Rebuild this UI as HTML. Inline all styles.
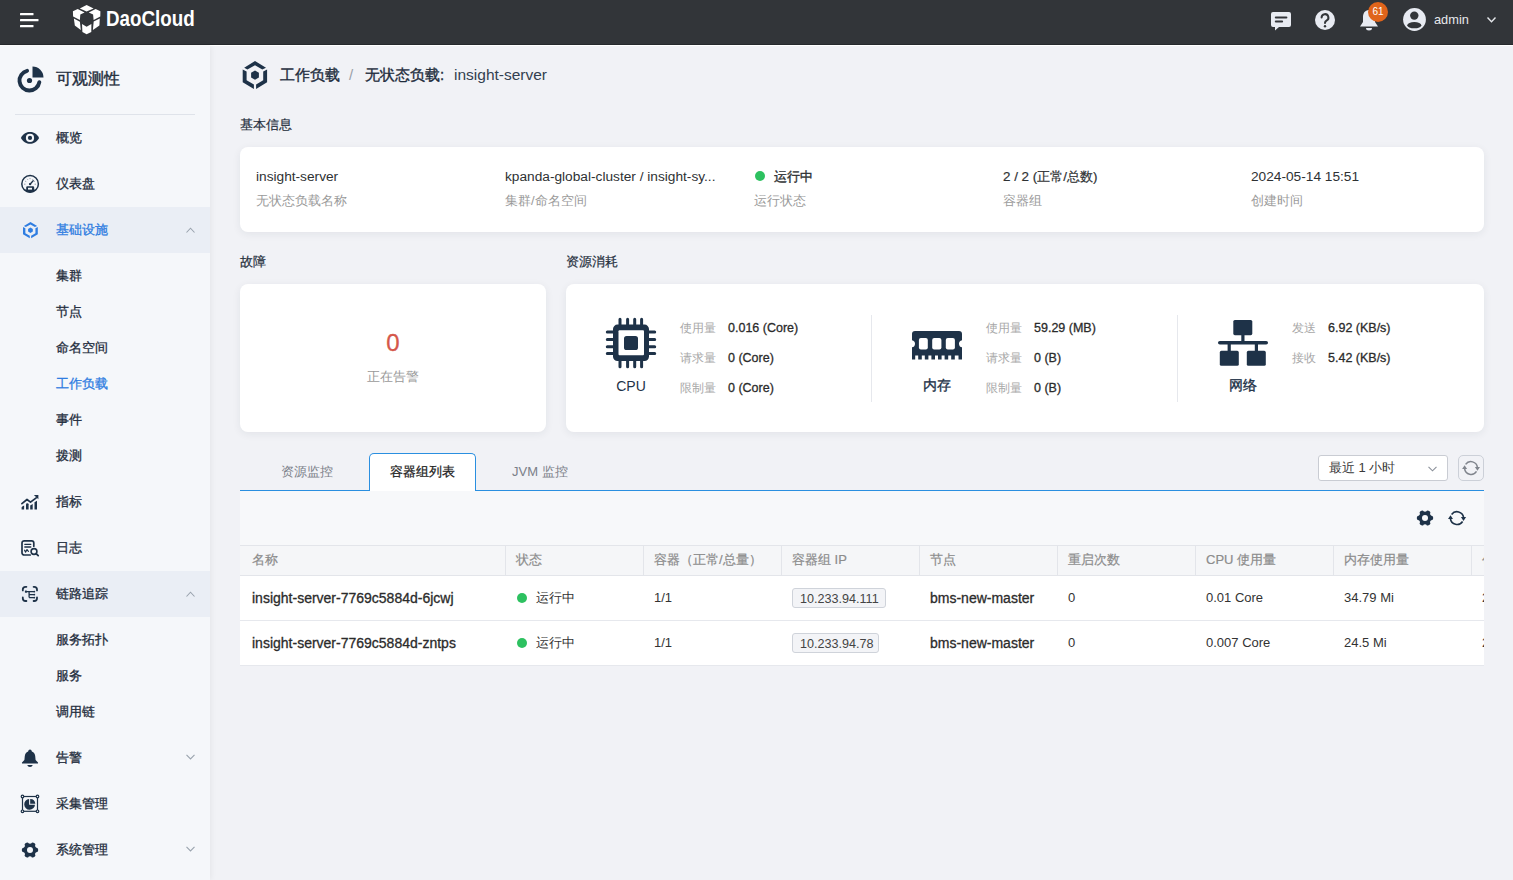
<!DOCTYPE html>
<html><head><meta charset="utf-8">
<style>
*{box-sizing:border-box;margin:0;padding:0}
html,body{width:1513px;height:880px;overflow:hidden}
body{font-family:"Liberation Sans",sans-serif;background:#f1f2f6;position:relative;color:#252f3d}
.a{position:absolute;white-space:nowrap}
svg.a{overflow:visible}
#top{position:absolute;left:0;top:0;width:1513px;height:44px;background:#323539}
#side{position:absolute;left:0;top:46px;width:210px;height:834px;background:#f5f7fa;box-shadow:1px 0 6px rgba(0,0,0,0.06)}
.band{position:absolute;left:0;width:210px;height:46px;background:#eaeef5}
.nt{position:absolute;left:56px;font-size:13px;line-height:16px;color:#1f2d3d;white-space:nowrap;-webkit-text-stroke:0.3px currentColor}
.md{-webkit-text-stroke:0.3px currentColor}
.card{position:absolute;background:#fff;border-radius:8px;box-shadow:0 2px 8px rgba(30,40,60,0.07)}
.t14{font-size:13.7px;line-height:16px;color:#2e3133}
.g13{font-size:13px;line-height:16px;color:#9a9a9a}
.k12{font-size:12px;line-height:16px;color:#a8a8a8}
.v12{font-size:12.5px;line-height:16px;color:#2b2b2b;-webkit-text-stroke:0.3px currentColor}
.th{font-size:13px;line-height:16px;color:#8c8c8c;-webkit-text-stroke:0.2px currentColor}
.td{font-size:13px;line-height:16px;color:#333}
.tb{font-size:14px;line-height:16px;color:#2b2b2b;-webkit-text-stroke:0.3px currentColor}
.dot{position:absolute;width:10px;height:10px;border-radius:50%;background:#2dc160}
.vd{position:absolute;top:546px;width:1px;height:29px;background:#e3e5ea}
</style></head><body>

<!-- TOP BAR -->
<div id="top">
  <svg class="a" style="left:20px;top:13px" width="20" height="16" viewBox="0 0 20 16">
    <rect x="0" y="0" width="13.5" height="2.2" rx="0.5" fill="#fff"/>
    <rect x="0" y="6" width="18.5" height="2.2" rx="0.5" fill="#fff"/>
    <rect x="0" y="12" width="13.5" height="2.2" rx="0.5" fill="#fff"/>
  </svg>
  <!-- logo cube -->
  <svg class="a" style="left:70px;top:2px" width="34" height="34" viewBox="0 0 34 34">
    <g fill="#fff">
    <polygon points="16.6,2.9 23.6,6.4 16.6,9.6 9.8,6.4"/>
    <polygon points="2.9,9.2 7.7,7 14.6,10.4 10.3,12.6 9.9,18.1 3.1,14.4"/>
    <polygon points="30.4,9.2 25.6,7 18.8,10.4 23.1,12.6 23.6,18.1 30.3,14.4"/>
    <polygon points="3.9,16.6 9.9,19.8 10.8,27.9 4.8,23.6"/>
    <polygon points="29.8,16.4 23.7,19.6 22.9,27.9 29.4,23.6"/>
    <polygon points="12,22 16.6,24.8 21.4,22 21.3,30.1 16.6,32.2 12.4,30"/>
    </g>
  </svg>
  <div class="a" style="left:106.3px;top:6.3px;font-size:22.5px;font-weight:bold;color:#fff;line-height:26px;transform:scaleX(0.835);transform-origin:0 0">DaoCloud</div>

  <!-- message -->
  <svg class="a" style="left:1271px;top:12px" width="20" height="19" viewBox="0 0 20 19">
    <path d="M2,0 H18 A2,2 0 0 1 20,2 V13 A2,2 0 0 1 18,15 H8 L4,18.6 L4,15 H2 A2,2 0 0 1 0,13 V2 A2,2 0 0 1 2,0 Z" fill="#e8ebf2"/>
    <rect x="3.8" y="4.4" width="12.6" height="2" rx="1" fill="#323539"/>
    <rect x="3.8" y="8.6" width="8.3" height="2" rx="1" fill="#323539"/>
  </svg>
  <!-- help -->
  <svg class="a" style="left:1315px;top:9.6px" width="20" height="20" viewBox="0 0 20 20">
    <circle cx="10" cy="10" r="10" fill="#e8ebf2"/>
    <path d="M6.6,7.6 A3.4,3.4 0 1 1 11.5,10.6 C10.4,11.2 10,11.8 10,13" stroke="#323539" stroke-width="2" fill="none" stroke-linecap="round"/>
    <circle cx="10" cy="16.2" r="1.2" fill="#323539"/>
  </svg>
  <!-- bell -->
  <svg class="a" style="left:1359px;top:8px" width="20" height="23" viewBox="0 0 20 23">
    <path d="M10,2 C5.5,2 4,5.8 4,9.5 V14 L1,18.4 H19 L16,14 V9.5 C16,5.8 14.5,2 10,2 Z" fill="#e8ebf2"/>
    <path d="M7,20 A3,2.5 0 0 0 13,20 Z" fill="#e8ebf2"/>
  </svg>
  <div class="a" style="left:1368px;top:2px;width:20px;height:20px;border-radius:50%;background:#e0641b;color:#fff;font-size:10px;line-height:20px;text-align:center">61</div>
  <!-- avatar -->
  <svg class="a" style="left:1402.8px;top:8px" width="23" height="23" viewBox="0 0 23 23">
    <circle cx="11.5" cy="11.5" r="11.4" fill="#e8ebf2"/>
    <circle cx="11.3" cy="7.6" r="4.2" fill="#323539"/>
    <ellipse cx="11.3" cy="17.2" rx="7" ry="3.1" fill="#323539"/>
  </svg>
  <div class="a" style="left:1434px;top:11px;font-size:12.8px;color:#e6e8ec;line-height:18px">admin</div>
  <svg class="a" style="left:1487px;top:17px" width="9" height="6" viewBox="0 0 9 6">
    <path d="M0.5,0.6 L4.5,4.8 L8.5,0.6" stroke="#e6e8ec" stroke-width="1.4" fill="none"/>
  </svg>
</div>

<div class="a" style="left:0;top:44px;width:1513px;height:1px;background:#26292d"></div>
<div class="a" style="left:0;top:45px;width:1513px;height:1px;background:#fff"></div>
<!-- SIDEBAR -->
<div id="side"></div>
<div class="band" style="top:207px"></div>
<div class="band" style="top:571px"></div>

<!-- observability icon -->
<svg class="a" style="left:10px;top:60px" width="40" height="40" viewBox="0 0 40 40">
  <path d="M17.1,10.8 A10,10 0 1 0 29.35,22.2" stroke="#1e3248" stroke-width="3.9" fill="none" stroke-linecap="round"/>
  <path d="M22.5,17.5 V6.6 A10.9,10.9 0 0 1 33.5,17.5 Z" fill="#1e3248"/>
  <circle cx="19.5" cy="20.5" r="2.6" fill="#1e3248"/>
</svg>
<div class="a" style="left:56px;top:71px;font-size:16px;line-height:16px;-webkit-text-stroke:0.4px #1f2d3d;color:#1f2d3d">可观测性</div>
<div class="a" style="left:15px;top:114px;width:180px;height:1px;background:#dfe3ea"></div>

<!-- nav items -->
<svg class="a" style="left:16px;top:124px" width="28" height="28" viewBox="0 0 28 28">
  <path d="M4.9,13.9 C7.5,9.6 10.5,8.1 14,8.1 C17.5,8.1 20.5,9.6 23.1,13.9 C20.5,18.2 17.5,19.7 14,19.7 C10.5,19.7 7.5,18.2 4.9,13.9 Z" fill="#1e3248"/>
  <circle cx="14" cy="13.9" r="4.1" fill="#f5f7fa"/>
  <circle cx="14" cy="13.9" r="2.1" fill="#1e3248"/>
</svg>
<div class="nt" style="top:130px">概览</div>

<svg class="a" style="left:16px;top:170px" width="28" height="28" viewBox="0 0 28 28">
  <circle cx="14.1" cy="13.9" r="8.3" stroke="#1e3248" stroke-width="1.5" fill="none"/>
  <path d="M7.6,19.6 H20.6 A8.6,8.6 0 0 1 7.6,19.6 Z" fill="#1e3248"/>
  <rect x="10.2" y="16.2" width="8" height="4" rx="1.3" fill="#1e3248"/>
  <rect x="12" y="17.8" width="4" height="1.8" fill="#f5f7fa"/>
  <path d="M14,14.2 L17.2,10.8" stroke="#1e3248" stroke-width="1.3" stroke-linecap="round"/>
  <circle cx="14.1" cy="14.1" r="1.2" fill="#1e3248"/>
  <g stroke="#7d8794" stroke-width="0.9"><path d="M8.2,14.2 H9.4 M9.2,11.2 L10.2,11.6 M11.2,8.9 L11.8,9.7 M14,8.1 V9.1 M17.1,9 L16.6,9.7 M18.8,11.2 L18,11.6 M19.9,14.2 H18.7"/></g>
</svg>
<div class="nt" style="top:176px">仪表盘</div>


<svg class="a" style="left:22.5px;top:221.9px" width="14.8" height="16.2" viewBox="6.7 4.9 24.4 28" preserveAspectRatio="none">
  <polygon points="8.2,11.7 19,4.9 30,11.7 26.3,13.4 19,9.3 11.4,13.4" fill="#2f7de1"/>
  <polygon points="6.7,13.6 10.6,15.5 10.6,24.2 17.9,28.5 17.9,32.9 6.7,26.3" fill="#2f7de1"/>
  <polygon points="31.1,13.6 27.2,15.5 27.2,24.2 20.1,28.5 20.1,32.9 31.1,26.3" fill="#2f7de1"/>
  <polygon points="19,14.5 22.9,16.8 22.9,21.4 19,23.75 15.1,21.4 15.1,16.8" fill="#2f7de1"/>
</svg>
<div class="nt" style="top:222px;color:#2f7de1">基础设施</div>
<svg class="a" style="left:185.5px;top:227px" width="9" height="6" viewBox="0 0 9 6"><path d="M0.5,5.5 L4.5,1.2 L8.5,5.5" stroke="#9aa3ae" stroke-width="1.1" fill="none"/></svg>

<div class="nt" style="top:268px">集群</div>
<div class="nt" style="top:304px">节点</div>
<div class="nt" style="top:340px">命名空间</div>
<div class="nt" style="top:376px;color:#2f7de1">工作负载</div>
<div class="nt" style="top:412px">事件</div>
<div class="nt" style="top:448px">拨测</div>

<svg class="a" style="left:16px;top:488px" width="28" height="28" viewBox="0 0 28 28">
  <path d="M5.9,15.7 L11,11.5 L14.5,14.2 L20.2,9.8" stroke="#1e3248" stroke-width="1.7" fill="none" stroke-linecap="round" stroke-linejoin="round"/>
  <path d="M17.9,6.9 H22.4 V11.2 Z" fill="#1e3248"/>
  <path d="M5.6,21.6 V19.6 Q5.6,18.4 8.1,17.6 V21.6 Z" fill="#1e3248"/>
  <path d="M10,21.6 V16.3 Q10,15.2 11.3,15.2 Q12.6,15.2 12.6,16.3 V21.6 Z" fill="#1e3248"/>
  <path d="M14.2,21.6 V17.6 L16.7,16 V21.6 Z" fill="#1e3248"/>
  <path d="M18.5,21.6 V14.3 L21,12.7 V21.6 Z" fill="#1e3248"/>
</svg>
<div class="nt" style="top:494px">指标</div>

<svg class="a" style="left:16px;top:534px" width="28" height="28" viewBox="0 0 28 28">
  <path d="M17.8,12.2 V9 A2.2,2.2 0 0 0 15.6,6.8 H8.2 A2.2,2.2 0 0 0 6,9 V18.8 A2.2,2.2 0 0 0 8.2,21 H14.2" stroke="#1e3248" stroke-width="1.7" fill="none" stroke-linecap="round"/>
  <path d="M8.8,10.3 H14.8 M8.8,13 H14.8" stroke="#1e3248" stroke-width="1.3" stroke-linecap="round"/>
  <path d="M8.6,16.2 L9.5,18.1 L11,15.6 L12.4,17.3" stroke="#1e3248" stroke-width="1.2" fill="none" stroke-linecap="round" stroke-linejoin="round"/>
  <circle cx="18" cy="17.5" r="2.9" stroke="#1e3248" stroke-width="1.6" fill="none"/>
  <path d="M20.1,19.6 L22.2,21.6" stroke="#1e3248" stroke-width="1.8" stroke-linecap="round"/>
</svg>
<div class="nt" style="top:540px">日志</div>

<svg class="a" style="left:16px;top:580px" width="28" height="28" viewBox="0 0 28 28">
  <path d="M6.8,10.4 V9.6 A2.8,2.8 0 0 1 9.6,6.8 H10.4 M17.6,6.8 H18.2 A2.8,2.8 0 0 1 21,9.6 V10.4 M21,17.4 V18.2 A2.8,2.8 0 0 1 18.2,21 H17.6 M10.4,21 H9.6 A2.8,2.8 0 0 1 6.8,18.2 V17.4" stroke="#1e3248" stroke-width="1.8" fill="none" stroke-linecap="round"/>
  <rect x="8.9" y="10.5" width="2" height="2.2" rx="0.4" fill="#1e3248"/>
  <path d="M10,11.6 H18.4 M13.1,11.6 V17.6 M13.1,14.6 H18.4 M13.1,17.6 H18.4" stroke="#1e3248" stroke-width="1.3" fill="none"/>
  <g fill="#1e3248"><circle cx="18.3" cy="11.6" r="0.9"/><circle cx="18.3" cy="14.6" r="0.9"/><circle cx="18.3" cy="17.6" r="0.9"/></g>
</svg>
<div class="nt" style="top:586px">链路追踪</div>
<svg class="a" style="left:185.5px;top:591px" width="9" height="6" viewBox="0 0 9 6"><path d="M0.5,5.5 L4.5,1.2 L8.5,5.5" stroke="#9aa3ae" stroke-width="1.1" fill="none"/></svg>

<div class="nt" style="top:632px">服务拓扑</div>
<div class="nt" style="top:668px">服务</div>
<div class="nt" style="top:704px">调用链</div>

<svg class="a" style="left:16px;top:744px" width="28" height="28" viewBox="0 0 28 28">
  <path d="M14,5.5 C15,5.5 15.6,6.4 15.9,7.4 C18,8.1 18.9,9.8 19.2,12 L19.6,16 L22,18.6 C22.2,19.1 22,19.5 21.4,19.5 H6.6 C6,19.5 5.8,19.1 6,18.6 L8.4,16 L8.8,12 C9.1,9.8 10,8.1 12.1,7.4 C12.4,6.4 13,5.5 14,5.5 Z" fill="#1e3248"/>
  <path d="M11.3,21 H16.7 C16.4,22.3 15.4,23 14,23 C12.6,23 11.6,22.3 11.3,21 Z" fill="#1e3248"/>
</svg>
<div class="nt" style="top:750px">告警</div>
<svg class="a" style="left:185.5px;top:754px" width="9" height="6" viewBox="0 0 9 6"><path d="M0.5,0.8 L4.5,5 L8.5,0.8" stroke="#9aa3ae" stroke-width="1.1" fill="none"/></svg>

<svg class="a" style="left:16px;top:790px" width="28" height="28" viewBox="0 0 28 28">
  <rect x="6.5" y="6.5" width="15" height="14.8" stroke="#1e3248" stroke-width="1.2" fill="none"/>
  <g fill="#f5f7fa" stroke="#1e3248" stroke-width="1.2"><circle cx="6.5" cy="6.5" r="1.3"/><circle cx="21.5" cy="6.5" r="1.3"/><circle cx="6.5" cy="21.3" r="1.3"/><circle cx="21.5" cy="21.3" r="1.3"/></g>
  <path d="M13.1,8.9 V14.7 H19 A5.4,5.4 0 1 1 13.1,8.9 Z" fill="#1e3248"/>
  <path d="M14.2,8.9 A5.2,5.2 0 0 1 19.3,13.7 H14.2 Z" fill="#1e3248"/>
</svg>
<div class="nt" style="top:796px">采集管理</div>

<svg class="a" style="left:18px;top:838.2px" width="24" height="24" viewBox="0 0 24 24">
  <g transform="translate(12,12)" fill="#1e3248"><circle r="6.5"/><rect x="4.1" y="-2.2" width="4" height="4.4" rx="1.6" transform="rotate(0)"/><rect x="4.1" y="-2.2" width="4" height="4.4" rx="1.6" transform="rotate(60)"/><rect x="4.1" y="-2.2" width="4" height="4.4" rx="1.6" transform="rotate(120)"/><rect x="4.1" y="-2.2" width="4" height="4.4" rx="1.6" transform="rotate(180)"/><rect x="4.1" y="-2.2" width="4" height="4.4" rx="1.6" transform="rotate(240)"/><rect x="4.1" y="-2.2" width="4" height="4.4" rx="1.6" transform="rotate(300)"/></g>
  <circle cx="12" cy="12" r="3" fill="#f5f7fa"/>
</svg>
<div class="nt" style="top:842px">系统管理</div>
<svg class="a" style="left:185.5px;top:846px" width="9" height="6" viewBox="0 0 9 6"><path d="M0.5,0.8 L4.5,5 L8.5,0.8" stroke="#9aa3ae" stroke-width="1.1" fill="none"/></svg>

<!-- MAIN -->
<!-- breadcrumb -->
<svg class="a" style="left:236px;top:56px" width="38" height="38" viewBox="0 0 38 38">
  <polygon points="8.2,11.7 19,4.9 30,11.7 26.3,13.4 19,9.3 11.4,13.4" fill="#1e3248"/>
  <polygon points="6.7,13.6 10.6,15.5 10.6,24.2 17.9,28.5 17.9,32.9 6.7,26.3" fill="#1e3248"/>
  <polygon points="31.1,13.6 27.2,15.5 27.2,24.2 20.1,28.5 20.1,32.9 31.1,26.3" fill="#1e3248"/>
  <polygon points="19,14.5 22.9,16.8 22.9,21.4 19,23.75 15.1,21.4 15.1,16.8" fill="#1e3248"/>
</svg>
<div class="a" style="left:280px;top:67px;font-size:15px;line-height:16px;font-weight:normal;-webkit-text-stroke:0.35px currentColor;color:#1f2d3d">工作负载</div>
<div class="a" style="left:349px;top:67px;font-size:15px;line-height:16px;color:#9aa0a8">/</div>
<div class="a" style="left:365px;top:67px;font-size:15px;line-height:16px;font-weight:normal;-webkit-text-stroke:0.35px currentColor;color:#1f2d3d">无状态负载:</div>
<div class="a" style="left:454px;top:66px;font-size:15.5px;line-height:18px;color:#334050">insight-server</div>

<div class="a" style="left:240px;top:117px;font-size:13px;line-height:16px;-webkit-text-stroke:0.2px currentColor;color:#252f3d">基本信息</div>

<div class="card" style="left:240px;top:147px;width:1244px;height:85px"></div>
<div class="a t14" style="left:256px;top:169px">insight-server</div>
<div class="a g13" style="left:256px;top:192.5px">无状态负载名称</div>
<div class="a t14" style="left:505px;top:169px">kpanda-global-cluster / insight-sy...</div>
<div class="a g13" style="left:505px;top:192.5px">集群/命名空间</div>
<div class="dot" style="left:755px;top:171px"></div>
<div class="a t14" style="left:774px;top:169px;font-size:13px;font-weight:normal;-webkit-text-stroke:0.35px currentColor">运行中</div>
<div class="a g13" style="left:754px;top:193px">运行状态</div>
<div class="a t14" style="left:1003px;top:169px;font-size:13.4px;-webkit-text-stroke:0.2px currentColor">2 / 2 (正常/总数)</div>
<div class="a g13" style="left:1003px;top:192.5px">容器组</div>
<div class="a t14" style="left:1251px;top:169px">2024-05-14 15:51</div>
<div class="a g13" style="left:1251px;top:192.5px">创建时间</div>

<div class="a" style="left:240px;top:254px;font-size:13px;line-height:16px;-webkit-text-stroke:0.2px currentColor;color:#252f3d">故障</div>
<div class="a" style="left:566px;top:254px;font-size:13px;line-height:16px;-webkit-text-stroke:0.2px currentColor;color:#252f3d">资源消耗</div>

<div class="card" style="left:240px;top:284px;width:306px;height:148px"></div>
<div class="a" style="left:240px;top:329px;width:306px;text-align:center;font-size:24px;line-height:28px;-webkit-text-stroke:0.3px currentColor;color:#d5574a">0</div>
<div class="a" style="left:240px;top:369px;width:306px;text-align:center;font-size:13px;line-height:16px;color:#9a9a9a">正在告警</div>

<div class="card" style="left:566px;top:284px;width:918px;height:148px"></div>
<div class="a" style="left:871px;top:315px;width:1px;height:87px;background:#e6e8ed"></div>
<div class="a" style="left:1177px;top:315px;width:1px;height:87px;background:#e6e8ed"></div>

<!-- CPU icon -->
<svg class="a" style="left:606px;top:318px" width="50" height="50" viewBox="0 0 50 50">
  <rect x="7" y="6.6" width="36" height="36.4" rx="4.5" fill="#1e3248"/>
  <rect x="12.5" y="12.2" width="25.5" height="25" rx="1" fill="#fff"/>
  <rect x="18" y="18" width="14" height="14" rx="2.6" fill="#1e3248"/>
  <g stroke="#1e3248" stroke-width="3" stroke-linecap="round">
    <path d="M14,1.3 V7 M21.6,1.3 V7 M28.7,1.3 V7 M35.6,1.3 V7"/>
    <path d="M14,43 V48.7 M21.6,43 V48.7 M28.7,43 V48.7 M35.6,43 V48.7"/>
    <path d="M1.3,14 H7 M1.3,21.6 H7 M1.3,28.7 H7 M1.3,35.6 H7"/>
    <path d="M43,14 H48.7 M43,21.6 H48.7 M43,28.7 H48.7 M43,35.6 H48.7"/>
  </g>
</svg>
<div class="a" style="left:606px;top:378px;width:50px;text-align:center;font-size:14px;line-height:16px;color:#1e3248">CPU</div>
<div class="a k12" style="left:680px;top:320px">使用量</div>
<div class="a v12" style="left:728px;top:320px">0.016 (Core)</div>
<div class="a k12" style="left:680px;top:350px">请求量</div>
<div class="a v12" style="left:728px;top:350px">0 (Core)</div>
<div class="a k12" style="left:680px;top:380px">限制量</div>
<div class="a v12" style="left:728px;top:380px">0 (Core)</div>

<!-- memory icon -->
<svg class="a" style="left:912px;top:330.5px" width="50" height="29" viewBox="0 0 50 29">
  <path d="M3,0 H47 A3,3 0 0 1 50,3 V9.2 A3.6,3.6 0 0 0 50,16.3 V24.5 H0 V16.3 A3.6,3.6 0 0 0 0,9.2 V3 A3,3 0 0 1 3,0 Z" fill="#1e3248"/>
  <rect x="6.9" y="7.1" width="8.9" height="11.3" rx="2" fill="#fff"/>
  <rect x="20.2" y="7.1" width="9.2" height="11.3" rx="2" fill="#fff"/>
  <rect x="33.8" y="7.1" width="9.1" height="11.3" rx="2" fill="#fff"/>
  <g fill="#1e3248">
    <rect x="0" y="24" width="3.2" height="4.5"/><rect x="6.2" y="24" width="3.6" height="4.5"/><rect x="12.8" y="24" width="3.6" height="4.5"/><rect x="19.4" y="24" width="3.6" height="4.5"/><rect x="26" y="24" width="3.6" height="4.5"/><rect x="32.6" y="24" width="3.6" height="4.5"/><rect x="39.2" y="24" width="3.6" height="4.5"/><rect x="46.5" y="24" width="3.5" height="4.5"/>
  </g>
</svg>
<div class="a" style="left:912px;top:378px;width:50px;text-align:center;font-size:13.5px;line-height:16px;font-weight:normal;-webkit-text-stroke:0.35px currentColor;color:#1e3248">内存</div>
<div class="a k12" style="left:986px;top:320px">使用量</div>
<div class="a v12" style="left:1034px;top:320px">59.29 (MB)</div>
<div class="a k12" style="left:986px;top:350px">请求量</div>
<div class="a v12" style="left:1034px;top:350px">0 (B)</div>
<div class="a k12" style="left:986px;top:380px">限制量</div>
<div class="a v12" style="left:1034px;top:380px">0 (B)</div>

<!-- network icon -->
<svg class="a" style="left:1218px;top:320px" width="50" height="46" viewBox="0 0 50 46">
  <rect x="15.3" y="0" width="19" height="15.2" rx="1.6" fill="#1e3248"/>
  <rect x="23.3" y="14" width="3.2" height="8" fill="#1e3248"/>
  <rect x="0" y="21" width="50" height="3.6" rx="1.8" fill="#1e3248"/>
  <rect x="9.6" y="23" width="3.2" height="8" fill="#1e3248"/>
  <rect x="36.8" y="23" width="3.2" height="8" fill="#1e3248"/>
  <rect x="1.8" y="30.8" width="19" height="15" rx="1.6" fill="#1e3248"/>
  <rect x="28.8" y="30.8" width="19" height="15" rx="1.6" fill="#1e3248"/>
</svg>
<div class="a" style="left:1218px;top:378px;width:50px;text-align:center;font-size:13.5px;line-height:16px;font-weight:normal;-webkit-text-stroke:0.35px currentColor;color:#1e3248">网络</div>
<div class="a k12" style="left:1292px;top:320px">发送</div>
<div class="a v12" style="left:1328px;top:320px">6.92 (KB/s)</div>
<div class="a k12" style="left:1292px;top:350px">接收</div>
<div class="a v12" style="left:1328px;top:350px">5.42 (KB/s)</div>

<!-- TABS -->
<div class="a" style="left:240px;top:490px;width:1244px;height:1px;background:#2a8fe0"></div>
<div class="a" style="left:369px;top:453px;width:107px;height:38px;background:#fff;border:1px solid #2a8fe0;border-bottom:none;border-radius:5px 5px 0 0"></div>
<div class="a" style="left:281px;top:464px;font-size:13px;line-height:16px;color:#7b8089">资源监控</div>
<div class="a" style="left:390px;top:464px;font-size:13px;line-height:16px;-webkit-text-stroke:0.25px currentColor;color:#222">容器组列表</div>
<div class="a" style="left:512px;top:464px;font-size:13px;line-height:16px;color:#7b8089">JVM 监控</div>

<div class="a" style="left:1318px;top:455px;width:130px;height:26px;background:#fff;border:1px solid #c9ccd3;border-radius:3px"></div>
<div class="a" style="left:1329px;top:460px;font-size:13px;line-height:16px;color:#3a3a3a">最近 1 小时</div>
<svg class="a" style="left:1428px;top:465.5px" width="9" height="6" viewBox="0 0 9 6"><path d="M0.5,0.8 L4.5,4.8 L8.5,0.8" stroke="#8a9099" stroke-width="1.1" fill="none"/></svg>
<div class="a" style="left:1458px;top:455px;width:26px;height:26px;border:1px solid #ccd0d8;border-radius:5px"></div>
<svg class="a" style="left:1460.8px;top:457.8px" width="20" height="20" viewBox="0 0 20 20">
  <path d="M4.6,6.4 A6.5,6.5 0 0 1 16.4,9.6" stroke="#80858d" stroke-width="1.5" fill="none"/>
  <path d="M15.5,13.4 A6.5,6.5 0 0 1 3.6,10.6" stroke="#80858d" stroke-width="1.5" fill="none"/>
  <path d="M13.9,9.1 L19,9.1 L16.45,12.8 Z" fill="#80858d"/>
  <path d="M1.1,11 L6.1,11 L3.6,7.3 Z" fill="#80858d"/>
</svg>

<!-- TABLE -->
<div class="a" style="left:240px;top:491px;width:1244px;height:54px;background:#f7f8fa"></div>
<svg class="a" style="left:1413px;top:506px" width="24" height="24" viewBox="0 0 24 24">
  <g transform="translate(12,12)" fill="#1e3248"><circle r="6.5"/><rect x="4.1" y="-2.2" width="4" height="4.4" rx="1.6" transform="rotate(0)"/><rect x="4.1" y="-2.2" width="4" height="4.4" rx="1.6" transform="rotate(60)"/><rect x="4.1" y="-2.2" width="4" height="4.4" rx="1.6" transform="rotate(120)"/><rect x="4.1" y="-2.2" width="4" height="4.4" rx="1.6" transform="rotate(180)"/><rect x="4.1" y="-2.2" width="4" height="4.4" rx="1.6" transform="rotate(240)"/><rect x="4.1" y="-2.2" width="4" height="4.4" rx="1.6" transform="rotate(300)"/></g>
  <circle cx="12" cy="12" r="3" fill="#f7f8fa"/>
</svg>
<svg class="a" style="left:1447px;top:508px" width="20" height="20" viewBox="0 0 20 20">
  <path d="M4.6,6.4 A6.7,6.7 0 0 1 16.6,9.6" stroke="#1e3248" stroke-width="1.6" fill="none"/>
  <path d="M15.6,13.5 A6.7,6.7 0 0 1 3.4,10.6" stroke="#1e3248" stroke-width="1.6" fill="none"/>
  <path d="M13.9,9.1 L19.1,9.1 L16.5,12.9 Z" fill="#1e3248"/>
  <path d="M1,11 L6,11 L3.5,7.2 Z" fill="#1e3248"/>
</svg>

<div class="a" style="left:240px;top:545px;width:1244px;height:31px;background:#f5f6f8;border-top:1px solid #e3e5ea;border-bottom:1px solid #e3e5ea"></div>
<div class="vd" style="left:505px"></div><div class="vd" style="left:643px"></div><div class="vd" style="left:781px"></div><div class="vd" style="left:919px"></div><div class="vd" style="left:1057px"></div><div class="vd" style="left:1195px"></div><div class="vd" style="left:1333px"></div><div class="vd" style="left:1471px"></div>
<div class="a th" style="left:252px;top:552px">名称</div>
<div class="a th" style="left:516px;top:552px">状态</div>
<div class="a th" style="left:654px;top:552px">容器（正常/总量）</div>
<div class="a th" style="left:792px;top:552px">容器组 IP</div>
<div class="a th" style="left:930px;top:552px">节点</div>
<div class="a th" style="left:1068px;top:552px">重启次数</div>
<div class="a th" style="left:1206px;top:552px">CPU 使用量</div>
<div class="a th" style="left:1344px;top:552px">内存使用量</div>

<div class="a" style="left:240px;top:576px;width:1244px;height:45px;background:#fff;border-bottom:1px solid #e6e8ed"></div>
<div class="a" style="left:240px;top:621px;width:1244px;height:45px;background:#fff;border-bottom:1px solid #e6e8ed"></div>

<div class="a tb" style="left:252px;top:590px">insight-server-7769c5884d-6jcwj</div>
<div class="dot" style="left:517px;top:592.5px"></div>
<div class="a td" style="left:536px;top:590px">运行中</div>
<div class="a td" style="left:654px;top:590px">1/1</div>
<div class="a" style="left:792px;top:588px;width:94px;height:20px;background:#f3f4f7;border:1px solid #cfd3da;border-radius:3px"></div>
<div class="a td" style="left:800px;top:590.5px;font-size:12.6px;color:#444">10.233.94.111</div>
<div class="a tb" style="left:930px;top:590px">bms-new-master</div>
<div class="a td" style="left:1068px;top:590px">0</div>
<div class="a td" style="left:1206px;top:590px">0.01 Core</div>
<div class="a td" style="left:1344px;top:590px">34.79 Mi</div>

<div class="a tb" style="left:252px;top:635px">insight-server-7769c5884d-zntps</div>
<div class="dot" style="left:517px;top:637.5px"></div>
<div class="a td" style="left:536px;top:635px">运行中</div>
<div class="a td" style="left:654px;top:635px">1/1</div>
<div class="a" style="left:792px;top:633px;width:87px;height:20px;background:#f3f4f7;border:1px solid #cfd3da;border-radius:3px"></div>
<div class="a td" style="left:800px;top:635.5px;font-size:12.6px;color:#444">10.233.94.78</div>
<div class="a tb" style="left:930px;top:635px">bms-new-master</div>
<div class="a td" style="left:1068px;top:635px">0</div>
<div class="a td" style="left:1206px;top:635px">0.007 Core</div>
<div class="a td" style="left:1344px;top:635px">24.5 Mi</div>

<div class="a" style="left:1472px;top:546px;width:12px;height:119px;overflow:hidden">
  <div class="a th" style="left:10px;top:6px">创建时间</div>
  <div class="a td" style="left:10px;top:44px">2024-05-14 15:51</div>
  <div class="a td" style="left:10px;top:89px">2024-05-14 15:51</div>
</div>
</body></html>
